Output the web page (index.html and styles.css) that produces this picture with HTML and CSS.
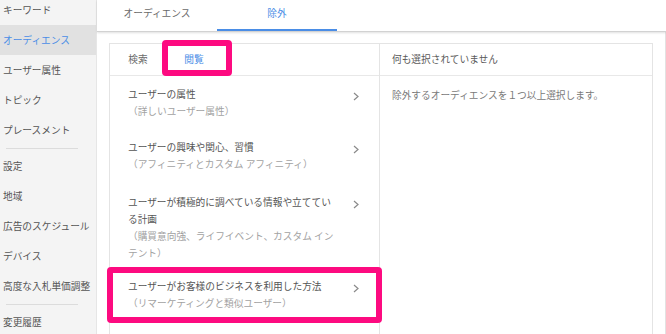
FILE: index.html
```html
<!DOCTYPE html>
<html>
<head>
    <title>オーディエンス 除外</title>
    <link rel="stylesheet" href="styles.css">
</head>
<body>
    <div class="app">
        <div class="sidebar">
            <div class="nav-item">キーワード</div>
            <div class="nav-item active">オーディエンス</div>
            <div class="nav-item">ユーザー属性</div>
            <div class="nav-item">トピック</div>
            <div class="nav-item">プレースメント</div>
            <div class="nav-divider"></div>
            <div class="nav-item">設定</div>
            <div class="nav-item">地域</div>
            <div class="nav-item">広告のスケジュール</div>
            <div class="nav-item">デバイス</div>
            <div class="nav-item">高度な入札単価調整</div>
            <div class="nav-divider"></div>
            <div class="nav-item">変更履歴</div>
        </div>

        <div class="main">
            <div class="tabs">
                <div class="tab">オーディエンス</div>
                <div class="tab selected">除外</div>
            </div>

            <div class="content">
                <div class="panel">
                    <div class="col-left">
                        <div class="panel-head">
                            <div class="head-tab">検索</div>
                            <div class="head-tab current marked">閲覧</div>
                        </div>
                        <div class="list-item">
                            <div class="item-text">
                                <div class="item-title">ユーザーの属性</div>
                                <div class="item-sub">（詳しいユーザー属性）</div>
                            </div>
                            <svg class="chevron" width="6" height="9" viewBox="0 0 6 9"><polyline points="1,1 5,4.5 1,8"/></svg>
                        </div>
                        <div class="list-item">
                            <div class="item-text">
                                <div class="item-title">ユーザーの興味や関心、習慣</div>
                                <div class="item-sub">（アフィニティとカスタム アフィニティ）</div>
                            </div>
                            <svg class="chevron" width="6" height="9" viewBox="0 0 6 9"><polyline points="1,1 5,4.5 1,8"/></svg>
                        </div>
                        <div class="list-item tall">
                            <div class="item-text">
                                <div class="item-title">ユーザーが積極的に調べている情報や立てている計画</div>
                                <div class="item-sub">（購買意向強、ライフイベント、カスタム インテント）</div>
                            </div>
                            <svg class="chevron" width="6" height="9" viewBox="0 0 6 9"><polyline points="1,1 5,4.5 1,8"/></svg>
                        </div>
                        <div class="list-item marked">
                            <div class="item-text">
                                <div class="item-title">ユーザーがお客様のビジネスを利用した方法</div>
                                <div class="item-sub">（リマーケティングと類似ユーザー）</div>
                            </div>
                            <svg class="chevron" width="6" height="9" viewBox="0 0 6 9"><polyline points="1,1 5,4.5 1,8"/></svg>
                        </div>
                    </div>

                    <div class="col-right">
                        <div class="panel-head">
                            <div class="head-label">何も選択されていません</div>
                        </div>
                        <div class="empty-note">除外するオーディエンスを１つ以上選択します。</div>
                    </div>
                </div>
            </div>
        </div>
    </div>
</body>
</html>
```

FILE: styles.css
```css
body {
    margin: 0;
    font-family: "Noto Sans CJK JP", "Noto Sans", sans-serif;
    font-size: 9.7px;
    color: #555;
    background: #fff;
}
.app {
    display: flex;
    width: 666px;
    height: 334px;
    overflow: hidden;
}

/* サイドメニュー */
.sidebar {
    width: 96px;
    flex-shrink: 0;
    background-color: #f4f4f4;
    border-right: 1px solid #e6e6e6;
    margin-top: -5px;
}
.nav-item {
    height: 30px;
    line-height: 30px;
    padding-left: 3px;
    color: #555;
    white-space: nowrap;
}
.nav-item.active {
    background-color: #e1e1e1;
    color: #4a8de6;
}
.nav-divider {
    height: 1px;
    margin: 3px 18px 2px 6px;
    background-color: #dcdcdc;
}

/* メイン */
.main {
    flex: 1;
    display: flex;
    flex-direction: column;
    min-width: 0;
}
.tabs {
    display: flex;
    height: 31px;
    border-bottom: 1px solid #d2d2d2;
    box-shadow: 0 1px 2px rgba(0,0,0,0.12);
    position: relative;
    z-index: 1;
}
.tab {
    width: 120px;
    height: 29px;
    line-height: 26px;
    text-align: center;
    color: #6a6a6a;
}
.tab.selected {
    color: #4a8de6;
    border-bottom: 2px solid #4a8de6;
}
.content {
    flex: 1;
    padding: 11px 12px 0 12px;
    border-right: 1px solid #e2e2e2;
}

.panel {
    display: grid;
    grid-template-columns: 270px 1fr;
    border: 1px solid #e4e4e4;
    border-bottom: none;
    min-height: 300px;
}
.col-left {
    border-right: 1px solid #e4e4e4;
}
.panel-head {
    display: flex;
    height: 31px;
    line-height: 31px;
    border-bottom: 1px solid #e8e8e8;
}
.head-tab {
    width: 56px;
    text-align: center;
    color: #6a6a6a;
    position: relative;
}
.head-tab.current {
    color: #4a8de6;
}
.head-label {
    padding-left: 12px;
    color: #5a5a5a;
}

.list-item {
    display: flex;
    padding: 10px 20px 10px 18px;
    line-height: 16.5px;
    position: relative;
}
.list-item.tall {
    padding-top: 12px;
    padding-bottom: 6px;
    line-height: 17px;
}
.item-text {
    width: 208px;
}
.item-title {
    color: #555;
}
.item-sub {
    color: #a2a2a2;
}
.chevron {
    margin-left: auto;
    margin-top: 6px;
    fill: none;
    stroke: #8a8a8a;
    stroke-width: 1.2;
}
.empty-note {
    padding: 11px 12px;
    line-height: 16.5px;
    color: #7a7a7a;
}

/* ピンクの注釈枠 */
.marked::after {
    content: "";
    position: absolute;
    border: 6px solid #fd0a80;
    border-radius: 4px;
    pointer-events: none;
}
.head-tab.marked::after {
    top: -4px;
    bottom: -1px;
    left: -4px;
    right: -10px;
}
.list-item.marked::after {
    top: -1px;
    bottom: -2px;
    left: -3px;
    right: -3px;
}
```
